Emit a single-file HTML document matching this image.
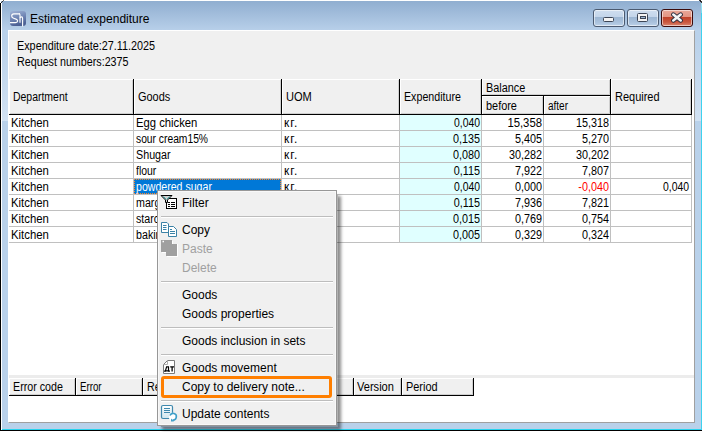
<!DOCTYPE html>
<html><head><meta charset="utf-8"><style>
html,body{margin:0;padding:0;background:#fff;}
#r{position:relative;width:702px;height:432px;overflow:hidden;background:#fff;font-family:"Liberation Sans",sans-serif;}
#r div{position:absolute;box-sizing:border-box;}
#r .t{white-space:pre;}
</style></head><body><div id="r">
<div style="left:1px;top:1px;width:700px;height:429px;background:#b9d1ea;"></div>
<div style="left:1px;top:1px;width:700px;height:29px;background:linear-gradient(#90aed0,#b7cfe9);"></div>
<div style="left:2px;top:40px;width:6px;height:81px;background:linear-gradient(#b9d1ea,#d2e2f3);"></div>
<div style="left:695px;top:40px;width:6px;height:81px;background:linear-gradient(#b9d1ea,#d2e2f3);"></div>
<div style="left:0px;top:3px;width:1px;height:428px;background:#000;"></div>
<div style="left:1px;top:2px;width:1px;height:428px;background:#fff;"></div>
<div style="left:0px;top:430px;width:702px;height:1px;background:#000;"></div>
<div style="left:2px;top:429px;width:700px;height:1px;background:#27d3ee;"></div>
<div style="left:701px;top:2px;width:1px;height:428px;background:#3ed2ef;"></div>
<div style="left:1px;top:2px;width:1px;height:1px;background:#333;"></div>
<div style="left:2px;top:1px;width:1px;height:1px;background:#333;"></div>
<div style="left:3px;top:0px;width:1px;height:1px;background:#666;"></div>
<div style="left:699px;top:0px;width:1px;height:1px;background:#444;"></div>
<div style="left:700px;top:0px;width:1px;height:2px;background:#222;"></div>
<div style="left:701px;top:1px;width:1px;height:2px;background:#333;"></div>
<div style="left:701px;top:3px;width:1px;height:10px;background:linear-gradient(#a8e6f5,#6fdcf2);"></div>
<svg style="position:absolute;left:10px;top:10px" width="17" height="17" viewBox="0 0 17 17">
<defs><linearGradient id="ig" x1="0" y1="0" x2="0.3" y2="1"><stop offset="0" stop-color="#9fb3d6"/><stop offset="0.5" stop-color="#7388b6"/><stop offset="1" stop-color="#4c6094"/></linearGradient></defs>
<rect x="0" y="1" width="16" height="15" rx="3" fill="url(#ig)"/>
<path d="M10 3.8 H3.8 Q1.7 3.8 1.7 6 Q1.7 7.7 3.6 8.3 L6 9.1 Q7.6 9.7 7.6 11.1 Q7.6 12.6 5.5 12.6 H0" fill="none" stroke="#fff" stroke-width="1.15"/>
<path d="M9.2 3.8 Q10 3.8 10 5 V12.8" fill="none" stroke="#fff" stroke-width="1.1"/>
<path d="M10 8 Q10.5 6.9 11.6 6.9 Q12.6 6.9 12.6 8.6 V16.5" fill="none" stroke="#fff" stroke-width="1.1"/>
</svg>
<div class="t" style="left:30px;top:10.84px;font-size:12px;line-height:16px;color:#000;">Estimated expenditure</div>
<div style="left:593px;top:9px;width:32px;height:18px;border:1px solid #4b5a70;border-radius:3px;background:linear-gradient(#cfdeef 0%,#c3d5ea 45%,#9db7d3 46%,#a9c1dc 75%,#bcd1e8 100%);box-shadow:inset 0 0 0 1px rgba(255,255,255,0.55);"></div>
<div style="left:627px;top:9px;width:32px;height:18px;border:1px solid #4b5a70;border-radius:3px;background:linear-gradient(#cfdeef 0%,#c3d5ea 45%,#9db7d3 46%,#a9c1dc 75%,#bcd1e8 100%);box-shadow:inset 0 0 0 1px rgba(255,255,255,0.55);"></div>
<div style="left:661px;top:9px;width:32px;height:18px;border:1px solid #3b0b0b;border-radius:3px;background:linear-gradient(#e9a899 0%,#e29482 45%,#c0432b 46%,#c9563d 75%,#db8670 100%);box-shadow:inset 0 0 0 1px rgba(255,255,255,0.55);"></div>
<div style="left:603px;top:17px;width:11px;height:5px;background:#f4f4f4;border:1px solid #3d4656;border-radius:1.5px;"></div>
<div style="left:637px;top:13px;width:11px;height:9px;background:#f4f4f4;border:1px solid #3d4656;border-radius:1.5px;"></div>
<div style="left:640px;top:16px;width:6px;height:3px;background:#9fb8d4;border:1px solid #3d4656;"></div>
<svg style="position:absolute;left:670px;top:12px" width="14" height="11" viewBox="0 0 14 11">
<path d="M3.3 2.6 L10.7 8.4 M10.7 2.6 L3.3 8.4" stroke="#2d2f3f" stroke-width="4.4" stroke-linecap="round"/>
<path d="M3.3 2.6 L10.7 8.4 M10.7 2.6 L3.3 8.4" stroke="#f4f4f4" stroke-width="2.6" stroke-linecap="round"/>
</svg>
<div style="left:8px;top:30px;width:687px;height:393px;background:#f0f0f0;border-top:1px solid #fff;border-left:1px solid #fff;border-right:1px solid #a0a0a0;border-bottom:1px solid #a0a0a0;"></div>
<div class="t" style="left:17px;top:37.84px;font-size:12px;line-height:16px;color:#000;transform:scaleX(0.901);transform-origin:left center;">Expenditure date:27.11.2025</div>
<div class="t" style="left:17px;top:53.84px;font-size:12px;line-height:16px;color:#000;transform:scaleX(0.894);transform-origin:left center;">Request numbers:2375</div>
<div style="left:9px;top:79px;width:685px;height:296px;background:#fff;"></div>
<div style="left:9px;top:375px;width:685px;height:3px;background:#ececec;"></div>
<div style="left:9px;top:378px;width:685px;height:44px;background:#fff;"></div>
<div style="left:9px;top:79px;width:125px;height:36px;background:#f0f0f0;"></div>
<div style="left:9px;top:79px;width:124px;height:1px;background:#fff;"></div>
<div style="left:9px;top:79px;width:1px;height:35px;background:#fff;"></div>
<div style="left:132px;top:80px;width:1px;height:34px;background:#cfcfcf;"></div>
<div style="left:10px;top:113px;width:123px;height:1px;background:#cfcfcf;"></div>
<div style="left:133px;top:79px;width:1px;height:36px;background:#000;"></div>
<div style="left:9px;top:114px;width:125px;height:1px;background:#000;"></div>
<div style="left:134px;top:79px;width:148px;height:36px;background:#f0f0f0;"></div>
<div style="left:134px;top:79px;width:147px;height:1px;background:#fff;"></div>
<div style="left:134px;top:79px;width:1px;height:35px;background:#fff;"></div>
<div style="left:280px;top:80px;width:1px;height:34px;background:#cfcfcf;"></div>
<div style="left:135px;top:113px;width:146px;height:1px;background:#cfcfcf;"></div>
<div style="left:281px;top:79px;width:1px;height:36px;background:#000;"></div>
<div style="left:134px;top:114px;width:148px;height:1px;background:#000;"></div>
<div style="left:282px;top:79px;width:118px;height:36px;background:#f0f0f0;"></div>
<div style="left:282px;top:79px;width:117px;height:1px;background:#fff;"></div>
<div style="left:282px;top:79px;width:1px;height:35px;background:#fff;"></div>
<div style="left:398px;top:80px;width:1px;height:34px;background:#cfcfcf;"></div>
<div style="left:283px;top:113px;width:116px;height:1px;background:#cfcfcf;"></div>
<div style="left:399px;top:79px;width:1px;height:36px;background:#000;"></div>
<div style="left:282px;top:114px;width:118px;height:1px;background:#000;"></div>
<div style="left:400px;top:79px;width:82px;height:36px;background:#f0f0f0;"></div>
<div style="left:400px;top:79px;width:81px;height:1px;background:#fff;"></div>
<div style="left:400px;top:79px;width:1px;height:35px;background:#fff;"></div>
<div style="left:480px;top:80px;width:1px;height:34px;background:#cfcfcf;"></div>
<div style="left:401px;top:113px;width:80px;height:1px;background:#cfcfcf;"></div>
<div style="left:481px;top:79px;width:1px;height:36px;background:#000;"></div>
<div style="left:400px;top:114px;width:82px;height:1px;background:#000;"></div>
<div style="left:482px;top:79px;width:129px;height:17px;background:#f0f0f0;"></div>
<div style="left:482px;top:79px;width:128px;height:1px;background:#fff;"></div>
<div style="left:482px;top:79px;width:1px;height:16px;background:#fff;"></div>
<div style="left:609px;top:80px;width:1px;height:15px;background:#cfcfcf;"></div>
<div style="left:483px;top:94px;width:127px;height:1px;background:#cfcfcf;"></div>
<div style="left:610px;top:79px;width:1px;height:17px;background:#000;"></div>
<div style="left:482px;top:95px;width:129px;height:1px;background:#000;"></div>
<div style="left:482px;top:96px;width:62px;height:19px;background:#f0f0f0;"></div>
<div style="left:482px;top:96px;width:61px;height:1px;background:#fff;"></div>
<div style="left:482px;top:96px;width:1px;height:18px;background:#fff;"></div>
<div style="left:542px;top:97px;width:1px;height:17px;background:#cfcfcf;"></div>
<div style="left:483px;top:113px;width:60px;height:1px;background:#cfcfcf;"></div>
<div style="left:543px;top:96px;width:1px;height:19px;background:#000;"></div>
<div style="left:482px;top:114px;width:62px;height:1px;background:#000;"></div>
<div style="left:544px;top:96px;width:67px;height:19px;background:#f0f0f0;"></div>
<div style="left:544px;top:96px;width:66px;height:1px;background:#fff;"></div>
<div style="left:544px;top:96px;width:1px;height:18px;background:#fff;"></div>
<div style="left:609px;top:97px;width:1px;height:17px;background:#cfcfcf;"></div>
<div style="left:545px;top:113px;width:65px;height:1px;background:#cfcfcf;"></div>
<div style="left:610px;top:96px;width:1px;height:19px;background:#000;"></div>
<div style="left:544px;top:114px;width:67px;height:1px;background:#000;"></div>
<div style="left:611px;top:79px;width:81px;height:36px;background:#f0f0f0;"></div>
<div style="left:611px;top:79px;width:80px;height:1px;background:#fff;"></div>
<div style="left:611px;top:79px;width:1px;height:35px;background:#fff;"></div>
<div style="left:690px;top:80px;width:1px;height:34px;background:#cfcfcf;"></div>
<div style="left:612px;top:113px;width:79px;height:1px;background:#cfcfcf;"></div>
<div style="left:691px;top:79px;width:1px;height:36px;background:#000;"></div>
<div style="left:611px;top:114px;width:81px;height:1px;background:#000;"></div>
<div class="t" style="left:13px;top:88.84px;font-size:12px;line-height:16px;color:#000;transform:scaleX(0.871);transform-origin:left center;">Department</div>
<div class="t" style="left:138px;top:88.84px;font-size:12px;line-height:16px;color:#000;transform:scaleX(0.912);transform-origin:left center;">Goods</div>
<div class="t" style="left:286px;top:88.84px;font-size:12px;line-height:16px;color:#000;transform:scaleX(0.923);transform-origin:left center;">UOM</div>
<div class="t" style="left:404px;top:88.84px;font-size:12px;line-height:16px;color:#000;transform:scaleX(0.889);transform-origin:left center;">Expenditure</div>
<div class="t" style="left:486px;top:79.84px;font-size:12px;line-height:16px;color:#000;transform:scaleX(0.905);transform-origin:left center;">Balance</div>
<div class="t" style="left:486px;top:97.84px;font-size:12px;line-height:16px;color:#000;transform:scaleX(0.909);transform-origin:left center;">before</div>
<div class="t" style="left:548px;top:97.84px;font-size:12px;line-height:16px;color:#000;transform:scaleX(0.833);transform-origin:left center;">after</div>
<div class="t" style="left:615px;top:88.84px;font-size:12px;line-height:16px;color:#000;transform:scaleX(0.915);transform-origin:left center;">Required</div>
<div style="left:400px;top:115px;width:81px;height:127px;background:#e0ffff;"></div>
<div style="left:134px;top:179px;width:147px;height:15px;background:#0078d7;"></div>
<div style="left:134px;top:179px;width:147px;height:15px;border:1px dotted #ff8728;"></div>
<div style="left:9px;top:130px;width:683px;height:1px;background:#c0c0c0;"></div>
<div style="left:9px;top:146px;width:683px;height:1px;background:#c0c0c0;"></div>
<div style="left:9px;top:162px;width:683px;height:1px;background:#c0c0c0;"></div>
<div style="left:9px;top:178px;width:683px;height:1px;background:#c0c0c0;"></div>
<div style="left:9px;top:194px;width:683px;height:1px;background:#c0c0c0;"></div>
<div style="left:9px;top:210px;width:683px;height:1px;background:#c0c0c0;"></div>
<div style="left:9px;top:226px;width:683px;height:1px;background:#c0c0c0;"></div>
<div style="left:9px;top:242px;width:683px;height:1px;background:#c0c0c0;"></div>
<div style="left:133px;top:115px;width:1px;height:128px;background:#c0c0c0;"></div>
<div style="left:281px;top:115px;width:1px;height:128px;background:#c0c0c0;"></div>
<div style="left:399px;top:115px;width:1px;height:128px;background:#c0c0c0;"></div>
<div style="left:481px;top:115px;width:1px;height:128px;background:#c0c0c0;"></div>
<div style="left:543px;top:115px;width:1px;height:128px;background:#c0c0c0;"></div>
<div style="left:610px;top:115px;width:1px;height:128px;background:#c0c0c0;"></div>
<div style="left:691px;top:115px;width:1px;height:128px;background:#c0c0c0;"></div>
<div class="t" style="left:11px;top:114.84px;font-size:12px;line-height:16px;color:#000;transform:scaleX(0.947);transform-origin:left center;">Kitchen</div>
<div class="t" style="left:136px;top:114.84px;font-size:12px;line-height:16px;color:#000;transform:scaleX(0.938);transform-origin:left center;">Egg chicken</div>
<div class="t" style="left:284px;top:114.84px;font-size:12px;line-height:16px;color:#000;letter-spacing:0.9px;">кг.</div>
<div class="t" style="left:280px;width:200px;text-align:right;top:114.84px;font-size:12px;line-height:16px;color:#000;transform:scaleX(0.867);transform-origin:right center;">0,040</div>
<div class="t" style="left:342px;width:200px;text-align:right;top:114.84px;font-size:12px;line-height:16px;color:#000;transform:scaleX(0.943);transform-origin:right center;">15,358</div>
<div class="t" style="left:409px;width:200px;text-align:right;top:114.84px;font-size:12px;line-height:16px;color:#000;transform:scaleX(0.900);transform-origin:right center;">15,318</div>
<div class="t" style="left:11px;top:130.84px;font-size:12px;line-height:16px;color:#000;transform:scaleX(0.947);transform-origin:left center;">Kitchen</div>
<div class="t" style="left:136px;top:130.84px;font-size:12px;line-height:16px;color:#000;transform:scaleX(0.857);transform-origin:left center;">sour cream15%</div>
<div class="t" style="left:284px;top:130.84px;font-size:12px;line-height:16px;color:#000;letter-spacing:0.9px;">кг.</div>
<div class="t" style="left:280px;width:200px;text-align:right;top:130.84px;font-size:12px;line-height:16px;color:#000;transform:scaleX(0.900);transform-origin:right center;">0,135</div>
<div class="t" style="left:342px;width:200px;text-align:right;top:130.84px;font-size:12px;line-height:16px;color:#000;transform:scaleX(0.900);transform-origin:right center;">5,405</div>
<div class="t" style="left:409px;width:200px;text-align:right;top:130.84px;font-size:12px;line-height:16px;color:#000;transform:scaleX(0.900);transform-origin:right center;">5,270</div>
<div class="t" style="left:11px;top:146.84px;font-size:12px;line-height:16px;color:#000;transform:scaleX(0.947);transform-origin:left center;">Kitchen</div>
<div class="t" style="left:136px;top:146.84px;font-size:12px;line-height:16px;color:#000;transform:scaleX(0.895);transform-origin:left center;">Shugar</div>
<div class="t" style="left:284px;top:146.84px;font-size:12px;line-height:16px;color:#000;letter-spacing:0.9px;">кг.</div>
<div class="t" style="left:280px;width:200px;text-align:right;top:146.84px;font-size:12px;line-height:16px;color:#000;transform:scaleX(0.900);transform-origin:right center;">0,080</div>
<div class="t" style="left:342px;width:200px;text-align:right;top:146.84px;font-size:12px;line-height:16px;color:#000;transform:scaleX(0.900);transform-origin:right center;">30,282</div>
<div class="t" style="left:409px;width:200px;text-align:right;top:146.84px;font-size:12px;line-height:16px;color:#000;transform:scaleX(0.900);transform-origin:right center;">30,202</div>
<div class="t" style="left:11px;top:162.84px;font-size:12px;line-height:16px;color:#000;transform:scaleX(0.947);transform-origin:left center;">Kitchen</div>
<div class="t" style="left:136px;top:162.84px;font-size:12px;line-height:16px;color:#000;transform:scaleX(0.870);transform-origin:left center;">flour</div>
<div class="t" style="left:284px;top:162.84px;font-size:12px;line-height:16px;color:#000;letter-spacing:0.9px;">кг.</div>
<div class="t" style="left:280px;width:200px;text-align:right;top:162.84px;font-size:12px;line-height:16px;color:#000;transform:scaleX(0.900);transform-origin:right center;">0,115</div>
<div class="t" style="left:342px;width:200px;text-align:right;top:162.84px;font-size:12px;line-height:16px;color:#000;transform:scaleX(0.900);transform-origin:right center;">7,922</div>
<div class="t" style="left:409px;width:200px;text-align:right;top:162.84px;font-size:12px;line-height:16px;color:#000;transform:scaleX(0.900);transform-origin:right center;">7,807</div>
<div class="t" style="left:11px;top:178.84px;font-size:12px;line-height:16px;color:#000;transform:scaleX(0.947);transform-origin:left center;">Kitchen</div>
<div class="t" style="left:136px;top:178.84px;font-size:12px;line-height:16px;color:#fff;transform:scaleX(0.882);transform-origin:left center;">powdered sugar</div>
<div class="t" style="left:284px;top:178.84px;font-size:12px;line-height:16px;color:#000;letter-spacing:0.9px;">кг.</div>
<div class="t" style="left:280px;width:200px;text-align:right;top:178.84px;font-size:12px;line-height:16px;color:#000;transform:scaleX(0.867);transform-origin:right center;">0,040</div>
<div class="t" style="left:342px;width:200px;text-align:right;top:178.84px;font-size:12px;line-height:16px;color:#000;transform:scaleX(0.900);transform-origin:right center;">0,000</div>
<div class="t" style="left:409px;width:200px;text-align:right;top:178.84px;font-size:12px;line-height:16px;color:#ff0000;transform:scaleX(0.900);transform-origin:right center;">-0,040</div>
<div class="t" style="left:489px;width:200px;text-align:right;top:178.84px;font-size:12px;line-height:16px;color:#000;transform:scaleX(0.867);transform-origin:right center;">0,040</div>
<div class="t" style="left:11px;top:194.84px;font-size:12px;line-height:16px;color:#000;transform:scaleX(0.947);transform-origin:left center;">Kitchen</div>
<div class="t" style="left:136px;top:194.84px;font-size:12px;line-height:16px;color:#000;transform:scaleX(0.890);transform-origin:left center;">margarine</div>
<div class="t" style="left:284px;top:194.84px;font-size:12px;line-height:16px;color:#000;letter-spacing:0.9px;">кг.</div>
<div class="t" style="left:280px;width:200px;text-align:right;top:194.84px;font-size:12px;line-height:16px;color:#000;transform:scaleX(0.900);transform-origin:right center;">0,115</div>
<div class="t" style="left:342px;width:200px;text-align:right;top:194.84px;font-size:12px;line-height:16px;color:#000;transform:scaleX(0.900);transform-origin:right center;">7,936</div>
<div class="t" style="left:409px;width:200px;text-align:right;top:194.84px;font-size:12px;line-height:16px;color:#000;transform:scaleX(0.900);transform-origin:right center;">7,821</div>
<div class="t" style="left:11px;top:210.84px;font-size:12px;line-height:16px;color:#000;transform:scaleX(0.947);transform-origin:left center;">Kitchen</div>
<div class="t" style="left:136px;top:210.84px;font-size:12px;line-height:16px;color:#000;transform:scaleX(0.890);transform-origin:left center;">starch</div>
<div class="t" style="left:284px;top:210.84px;font-size:12px;line-height:16px;color:#000;letter-spacing:0.9px;">кг.</div>
<div class="t" style="left:280px;width:200px;text-align:right;top:210.84px;font-size:12px;line-height:16px;color:#000;transform:scaleX(0.900);transform-origin:right center;">0,015</div>
<div class="t" style="left:342px;width:200px;text-align:right;top:210.84px;font-size:12px;line-height:16px;color:#000;transform:scaleX(0.900);transform-origin:right center;">0,769</div>
<div class="t" style="left:409px;width:200px;text-align:right;top:210.84px;font-size:12px;line-height:16px;color:#000;transform:scaleX(0.900);transform-origin:right center;">0,754</div>
<div class="t" style="left:11px;top:226.84px;font-size:12px;line-height:16px;color:#000;transform:scaleX(0.947);transform-origin:left center;">Kitchen</div>
<div class="t" style="left:136px;top:226.84px;font-size:12px;line-height:16px;color:#000;transform:scaleX(0.890);transform-origin:left center;">baking powder</div>
<div class="t" style="left:284px;top:226.84px;font-size:12px;line-height:16px;color:#000;letter-spacing:0.9px;">кг.</div>
<div class="t" style="left:280px;width:200px;text-align:right;top:226.84px;font-size:12px;line-height:16px;color:#000;transform:scaleX(0.900);transform-origin:right center;">0,005</div>
<div class="t" style="left:342px;width:200px;text-align:right;top:226.84px;font-size:12px;line-height:16px;color:#000;transform:scaleX(0.900);transform-origin:right center;">0,329</div>
<div class="t" style="left:409px;width:200px;text-align:right;top:226.84px;font-size:12px;line-height:16px;color:#000;transform:scaleX(0.900);transform-origin:right center;">0,324</div>
<div style="left:9px;top:378px;width:67px;height:18px;background:#f0f0f0;"></div>
<div style="left:9px;top:378px;width:66px;height:1px;background:#fff;"></div>
<div style="left:9px;top:378px;width:1px;height:17px;background:#fff;"></div>
<div style="left:74px;top:379px;width:1px;height:16px;background:#cfcfcf;"></div>
<div style="left:10px;top:394px;width:65px;height:1px;background:#cfcfcf;"></div>
<div style="left:75px;top:378px;width:1px;height:18px;background:#000;"></div>
<div style="left:9px;top:395px;width:67px;height:1px;background:#000;"></div>
<div style="left:76px;top:378px;width:67px;height:18px;background:#f0f0f0;"></div>
<div style="left:76px;top:378px;width:66px;height:1px;background:#fff;"></div>
<div style="left:76px;top:378px;width:1px;height:17px;background:#fff;"></div>
<div style="left:141px;top:379px;width:1px;height:16px;background:#cfcfcf;"></div>
<div style="left:77px;top:394px;width:65px;height:1px;background:#cfcfcf;"></div>
<div style="left:142px;top:378px;width:1px;height:18px;background:#000;"></div>
<div style="left:76px;top:395px;width:67px;height:1px;background:#000;"></div>
<div style="left:143px;top:378px;width:211px;height:18px;background:#f0f0f0;"></div>
<div style="left:143px;top:378px;width:210px;height:1px;background:#fff;"></div>
<div style="left:143px;top:378px;width:1px;height:17px;background:#fff;"></div>
<div style="left:352px;top:379px;width:1px;height:16px;background:#cfcfcf;"></div>
<div style="left:144px;top:394px;width:209px;height:1px;background:#cfcfcf;"></div>
<div style="left:353px;top:378px;width:1px;height:18px;background:#000;"></div>
<div style="left:143px;top:395px;width:211px;height:1px;background:#000;"></div>
<div style="left:354px;top:378px;width:48px;height:18px;background:#f0f0f0;"></div>
<div style="left:354px;top:378px;width:47px;height:1px;background:#fff;"></div>
<div style="left:354px;top:378px;width:1px;height:17px;background:#fff;"></div>
<div style="left:400px;top:379px;width:1px;height:16px;background:#cfcfcf;"></div>
<div style="left:355px;top:394px;width:46px;height:1px;background:#cfcfcf;"></div>
<div style="left:401px;top:378px;width:1px;height:18px;background:#000;"></div>
<div style="left:354px;top:395px;width:48px;height:1px;background:#000;"></div>
<div style="left:402px;top:378px;width:72px;height:18px;background:#f0f0f0;"></div>
<div style="left:402px;top:378px;width:71px;height:1px;background:#fff;"></div>
<div style="left:402px;top:378px;width:1px;height:17px;background:#fff;"></div>
<div style="left:472px;top:379px;width:1px;height:16px;background:#cfcfcf;"></div>
<div style="left:403px;top:394px;width:70px;height:1px;background:#cfcfcf;"></div>
<div style="left:473px;top:378px;width:1px;height:18px;background:#000;"></div>
<div style="left:402px;top:395px;width:72px;height:1px;background:#000;"></div>
<div class="t" style="left:13px;top:378.84px;font-size:12px;line-height:16px;color:#000;transform:scaleX(0.891);transform-origin:left center;">Error code</div>
<div class="t" style="left:80px;top:378.84px;font-size:12px;line-height:16px;color:#000;transform:scaleX(0.808);transform-origin:left center;">Error</div>
<div class="t" style="left:147px;top:378.84px;font-size:12px;line-height:16px;color:#000;transform:scaleX(0.890);transform-origin:left center;">Result</div>
<div class="t" style="left:357px;top:378.84px;font-size:12px;line-height:16px;color:#000;transform:scaleX(0.923);transform-origin:left center;">Version</div>
<div class="t" style="left:406px;top:378.84px;font-size:12px;line-height:16px;color:#000;transform:scaleX(0.909);transform-origin:left center;">Period</div>
<div style="left:161px;top:195px;width:177px;height:232px;box-shadow:2px 2px 3px 1px rgba(0,0,0,0.45);background:rgba(0,0,0,0.3);"></div>
<div style="left:157px;top:190px;width:180px;height:236px;background:#f0f0f0;border:1px solid #979797;"></div>
<div style="left:158px;top:191px;width:178px;height:234px;border:1px solid #f8f8f8;"></div>
<div class="t" style="left:182px;top:194.84px;font-size:12px;line-height:16px;color:#000;">Filter</div>
<div style="left:161px;top:216px;width:172px;height:1px;background:#bdbdbd;"></div>
<div style="left:161px;top:217px;width:172px;height:1px;background:#fff;"></div>
<div class="t" style="left:182px;top:221.84px;font-size:12px;line-height:16px;color:#000;">Copy</div>
<div class="t" style="left:182px;top:240.84px;font-size:12px;line-height:16px;color:#a0a0a0;">Paste</div>
<div class="t" style="left:182px;top:259.84px;font-size:12px;line-height:16px;color:#a0a0a0;">Delete</div>
<div style="left:161px;top:281px;width:172px;height:1px;background:#bdbdbd;"></div>
<div style="left:161px;top:282px;width:172px;height:1px;background:#fff;"></div>
<div class="t" style="left:182px;top:286.84px;font-size:12px;line-height:16px;color:#000;">Goods</div>
<div class="t" style="left:182px;top:305.84px;font-size:12px;line-height:16px;color:#000;">Goods properties</div>
<div style="left:161px;top:327px;width:172px;height:1px;background:#bdbdbd;"></div>
<div style="left:161px;top:328px;width:172px;height:1px;background:#fff;"></div>
<div class="t" style="left:182px;top:332.84px;font-size:12px;line-height:16px;color:#000;">Goods inclusion in sets</div>
<div style="left:161px;top:354px;width:172px;height:1px;background:#bdbdbd;"></div>
<div style="left:161px;top:355px;width:172px;height:1px;background:#fff;"></div>
<div class="t" style="left:182px;top:359.84px;font-size:12px;line-height:16px;color:#000;">Goods movement</div>
<div class="t" style="left:182px;top:378.84px;font-size:12px;line-height:16px;color:#000;">Copy to delivery note...</div>
<div style="left:161px;top:400px;width:172px;height:1px;background:#bdbdbd;"></div>
<div style="left:161px;top:401px;width:172px;height:1px;background:#fff;"></div>
<div class="t" style="left:182px;top:405.84px;font-size:12px;line-height:16px;color:#000;">Update contents</div>
<div style="left:161px;top:376px;width:171px;height:22px;border:3px solid #ff7f00;border-radius:3px;"></div>
<svg style="position:absolute;left:160px;top:194px" width="20" height="16" viewBox="0 0 20 16">
<rect x="6.5" y="4.5" width="10" height="10" fill="#fff" stroke="#000" stroke-width="1"/>
<path d="M8 8.5 h2 M11 8.5 h4 M8 10.5 h2 M11 10.5 h4 M8 12.5 h2 M11 12.5 h4" stroke="#000" stroke-width="1"/>
<path d="M0.5 0.5 H12.5 L8 5 V9 H5 V5 Z" fill="#fff"/>
<path d="M1 1.5 H12 L7.5 6 V8.5 H5.5 V6 Z" fill="#d0d0d0" stroke="#000" stroke-width="1"/>
<path d="M3.3 2.5 L6 5.3 M9.7 2.5 L7 5.3" stroke="#1f9a9a" stroke-width="1"/>
</svg>
<svg style="position:absolute;left:160px;top:221px" width="18" height="17" viewBox="0 0 18 17">
<path d="M1.5 1.5 H7 L8.5 3 V11.5 H1.5 Z" fill="#fff" stroke="#3b82a6" stroke-width="1"/>
<path d="M3 4.5 h3.5 M3 6.5 h3.5 M3 8.5 h3.5" stroke="#3b82a6" stroke-width="1"/>
<path d="M8.5 5.5 H13.5 L16.5 8.5 V15.5 H8.5 Z" fill="#fff" stroke="#3b82a6" stroke-width="1"/>
<path d="M10 8.5 h2 M10 10.5 h5 M10 12.5 h5" stroke="#3b82a6" stroke-width="1"/>
</svg>
<svg style="position:absolute;left:160px;top:239px" width="18" height="18" viewBox="0 0 18 18">
<path d="M2 2 H13 V5 H18 V18 H7 V14 H2 Z" fill="#fff"/>
<path d="M1 1 H12 V5 H17 V17 H6 V13 H1 Z" fill="#a0a0a0"/>
<rect x="2.5" y="1.8" width="1.5" height="1.5" fill="#fff"/>
</svg>
<svg style="position:absolute;left:162px;top:359px" width="14" height="16" viewBox="0 0 14 16">
<path d="M5.5 1.5 H12.5 V14.5 H1.5 V5.5 Z" fill="#fff" stroke="#7a7a7a" stroke-width="1"/>
<path d="M1.5 5.5 H5.5 V1.5" fill="none" stroke="#b0b0b0" stroke-width="1"/>
<path d="M2.3 11.9 H7.7 M2.9 11.9 V12.9 M7.1 11.9 V12.9 M3.4 11.9 L4.6 7.9 H6.5 V11.9" fill="none" stroke="#000" stroke-width="1.2"/>
<path d="M8.2 7.9 H12 M10.1 7.9 V12.5" fill="none" stroke="#000" stroke-width="1.3"/>
</svg>
<svg style="position:absolute;left:160px;top:404px" width="18" height="18" viewBox="0 0 18 18">
<defs><linearGradient id="ug" x1="0" y1="0" x2="0" y2="1"><stop offset="0" stop-color="#ffffff"/><stop offset="1" stop-color="#cfe6ee"/></linearGradient></defs>
<rect x="1.5" y="1.5" width="11" height="13" rx="1.5" fill="url(#ug)" stroke="#3f88ad" stroke-width="1.2"/>
<path d="M4 4.5 h6 M4 6.5 h6 M4 8.5 h6" stroke="#3f88ad" stroke-width="1"/>
<circle cx="13" cy="13" r="4.2" fill="#fff"/>
<path d="M10 11.5 A3.3 3.3 0 1 1 12.5 16" fill="none" stroke="#3f9fc8" stroke-width="1.6"/>
<path d="M11 14.5 L14 17.5 L11 17.5 Z" fill="#3f9fc8"/>
</svg>
</div></body></html>
